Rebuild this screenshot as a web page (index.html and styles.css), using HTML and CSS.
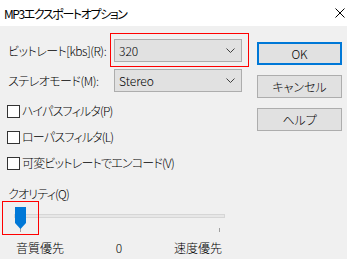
FILE: index.html
```html
<!DOCTYPE html>
<html lang="ja">
<head>
  <meta charset="UTF-8" />
  <title>MP3エクスポートオプション</title>
  <link rel="stylesheet" href="styles.css">
</head>
<body>
  <div class="window">
    <div class="titlebar">
      <span class="title">MP3エクスポートオプション</span>
      <svg class="close" width="10" height="10" viewBox="0 0 10 10">
        <path d="M0.5 0.5 L9.5 9.5 M9.5 0.5 L0.5 9.5" stroke="#000" stroke-width="1" fill="none"/>
      </svg>
    </div>

    <div class="dialog">
      <!-- 左側: 設定 -->
      <div class="form">
        <div class="row">
          <label>ビットレート[kbs](R):</label>
          <div class="combo marked">
            <span>320</span>
            <svg class="chevron" width="9" height="5" viewBox="0 0 9 5"><path d="M0.5 0.5 L4.5 4.5 L8.5 0.5" stroke="#404040" fill="none"/></svg>
          </div>
        </div>
        <div class="row">
          <label>ステレオモード(M):</label>
          <div class="combo">
            <span>Stereo</span>
            <svg class="chevron" width="9" height="5" viewBox="0 0 9 5"><path d="M0.5 0.5 L4.5 4.5 L8.5 0.5" stroke="#404040" fill="none"/></svg>
          </div>
        </div>

        <label class="check"><span class="box"></span>ハイパスフィルタ(P)</label>
        <label class="check"><span class="box"></span>ローパスフィルタ(L)</label>
        <label class="check"><span class="box"></span>可変ビットレートでエンコード(V)</label>

        <div class="quality-label">クオリティ(Q)</div>
        <div class="slider">
          <div class="track"></div>
          <span class="tick tick-left"></span>
          <span class="tick tick-right"></span>
          <svg class="thumb" width="11" height="22" viewBox="0 0 11 22">
            <path d="M0 0 H11 V16 L5.5 22 L0 16 Z" fill="#0078d7"/>
          </svg>
          <span class="slider-mark"></span>
        </div>
        <div class="scale">
          <span>音質優先</span>
          <span>0</span>
          <span>速度優先</span>
        </div>
      </div>

      <!-- 右側: ボタン -->
      <div class="buttons">
        <button class="default">OK</button>
        <button>キャンセル</button>
        <button>ヘルプ</button>
      </div>
    </div>
  </div>
</body>
</html>
```

FILE: styles.css
```css
/* General */
body {
  margin: 0;
  font-family: 'Noto Sans CJK JP', 'Noto Sans', sans-serif;
  font-size: 12px;
  font-weight: 300;
  color: #000;
  background: #f0f0f0;
}

.window {
  width: 347px;
  height: 259px;
  overflow: hidden;
  background: #f0f0f0;
}

/* Title bar */
.titlebar {
  height: 26px;
  background: #fff;
  display: flex;
  align-items: center;
  justify-content: space-between;
  padding: 0 2px 0 4px;
}

.title {
  font-size: 12px;
  font-weight: 400;
  letter-spacing: -1.4px;
  font-feature-settings: "palt";
}

/* Dialog body */
.dialog {
  display: flex;
  padding-top: 13px;
}

.form {
  width: 249px;
  padding-left: 8px;
  box-sizing: border-box;
}

.row {
  display: grid;
  grid-template-columns: 106px 128px;
  align-items: center;
  height: 23px;
  margin-bottom: 7px;
}

.row label,
.check,
.quality-label {
  font-feature-settings: "palt";
  letter-spacing: -0.5px;
  line-height: 16px;
}

.check,
.quality-label {
  letter-spacing: -0.8px;
}

.combo {
  position: relative;
  height: 23px;
  box-sizing: border-box;
  border: 1px solid #adadad;
  background: #e1e1e1;
  display: flex;
  align-items: center;
  justify-content: space-between;
  padding: 0 6px 0 4px;
  font-size: 12px;
}

.chevron {
  display: block;
}

/* 赤い枠 (注釈) */
.combo.marked::after {
  content: '';
  position: absolute;
  left: -5px;
  top: -7px;
  right: -8px;
  bottom: -6px;
  border: 1px solid #f00;
}

/* Checkboxes */
.check {
  display: flex;
  align-items: center;
  height: 26px;
}

.check:first-of-type {
  margin-top: -1px;
}

.box {
  width: 13px;
  height: 13px;
  box-sizing: border-box;
  border: 1px solid #333;
  background: #fff;
  margin: 0 2px 0 -1px;
}

.quality-label {
  margin-top: 10px;
}

/* Slider */
.slider {
  position: relative;
  height: 26px;
  margin-top: 4px;
  width: 222px;
}

.track {
  position: absolute;
  left: 6px;
  right: 5px;
  top: 8px;
  height: 4px;
  box-sizing: border-box;
  background: #e7e7e7;
  border: 1px solid #d6d6d6;
}

.thumb {
  position: absolute;
  left: 7px;
  top: 1px;
}

.tick {
  position: absolute;
  top: 22px;
  width: 1px;
  height: 4px;
  background: #a0a0a0;
}

.tick-left {
  left: 12px;
}

.tick-right {
  left: 211px;
}

.slider-mark {
  position: absolute;
  left: -6px;
  top: -5px;
  width: 37px;
  height: 34px;
  border: 1px solid #f00;
  box-sizing: border-box;
}

.scale {
  display: flex;
  justify-content: space-between;
  width: 206px;
  margin: 8px 0 0 8px;
  line-height: 16px;
}

/* Buttons */
.buttons {
  display: flex;
  flex-direction: column;
  gap: 10px;
  padding: 3px 0 0 8px;
}

.buttons button {
  width: 85px;
  height: 23px;
  box-sizing: border-box;
  background: #e1e1e1;
  border: 1px solid #adadad;
  font-family: 'Noto Sans CJK JP', 'Noto Sans', sans-serif;
  font-size: 12px;
  font-weight: 300;
  color: #000;
  padding: 0;
  font-feature-settings: "palt";
}

.buttons button.default {
  border: 2px solid #0078d7;
}
```
